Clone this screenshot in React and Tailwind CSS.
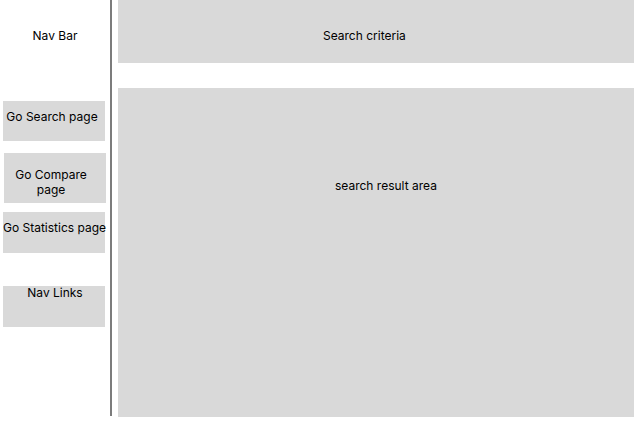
import React from 'react'

function NavButton({ label, className, textClassName }) {
  return (
    <div className={`bg-[#d9d9d9] ${className}`}>
      <div className={`flex justify-center whitespace-nowrap ${textClassName}`}>{label}</div>
    </div>
  )
}

export default function App() {
  return (
    <div
      className="flex w-[643px] h-[423px] bg-white text-black text-[12px] overflow-hidden"
      style={{ fontFamily: 'Inter, "Noto Sans", sans-serif' }}
    >
      {/* side nav */}
      <div className="flex flex-col w-[110px] shrink-0">
        <div className="h-[101px] pt-[27px] text-center">Nav Bar</div>
        <NavButton label="Go Search page" className="ml-[3px] w-[102px] h-[40px]" textClassName="pt-[7px] pr-[4px]" />
        <NavButton
          label={<span className="text-center whitespace-normal w-[80px]">Go Compare page</span>}
          className="mt-[12px] ml-[4px] w-[102px] h-[50px]"
          textClassName="pt-[14px] pr-[8px] leading-[15px]"
        />
        <NavButton label="Go Statistics page" className="mt-[9px] ml-[3px] w-[102px] h-[41px]" textClassName="pt-[7px] pl-[1px]" />
        <NavButton label="Nav Links" className="mt-[33px] ml-[3px] w-[102px] h-[41px]" textClassName="leading-[14px] pl-[2px]" />
      </div>

      <div className="w-[2px] h-[416px] bg-[#7c7c7c] shrink-0" />

      {/* content */}
      <div className="flex flex-col ml-[6px] w-[516px] shrink-0">
        <div className="h-[63px] bg-[#d9d9d9] pt-[27px] pl-[205px]">Search criteria</div>
        <div className="mt-[25px] h-[329px] bg-[#d9d9d9] pt-[89px] pl-[217px]">search result area</div>
      </div>
    </div>
  )
}
